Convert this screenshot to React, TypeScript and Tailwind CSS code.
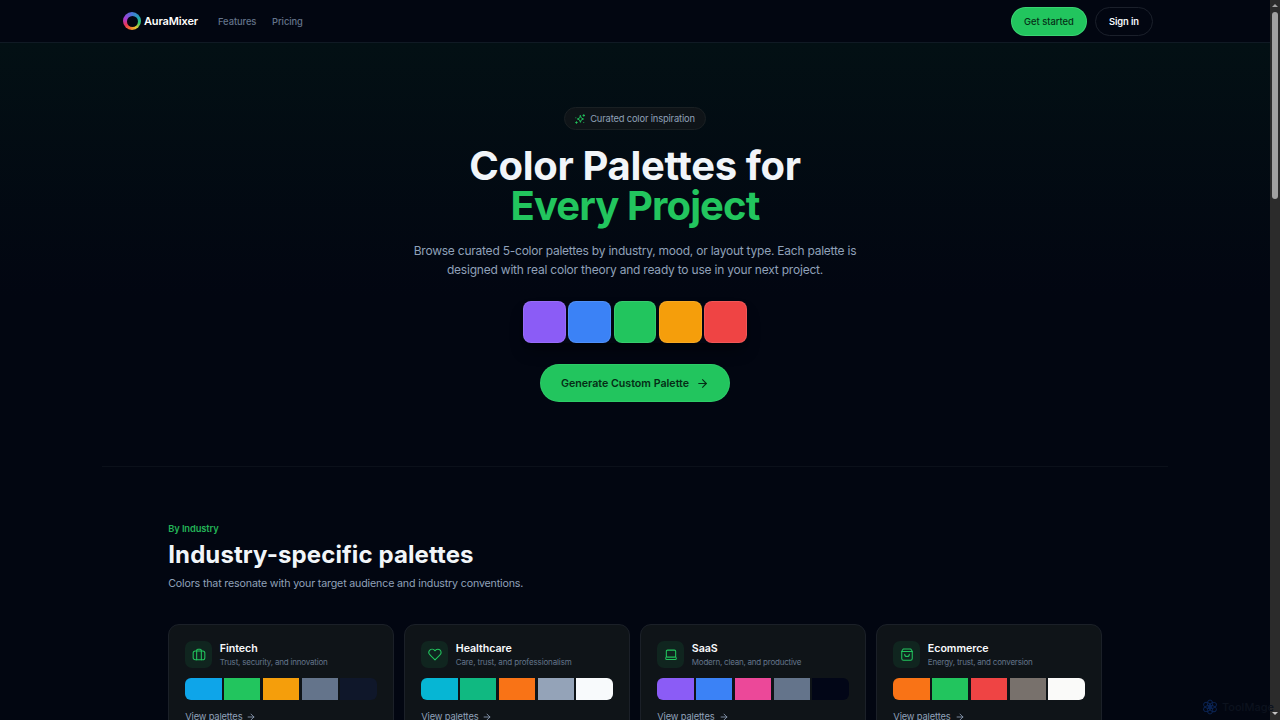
import { ArrowRight } from "lucide-react";
import type { ReactNode } from "react";

type Industry = {
  name: string;
  description: string;
  descriptionClass: string;
  icon: ReactNode;
  colors: string[];
};

const industries: Industry[] = [
  {
    name: "Fintech",
    description: "Trust, security, and innovation",
    descriptionClass: "tracking-[-0.2px]",
    icon: (
      <>
        <rect x="2" y="6" width="20" height="15" rx="3.5" />
        <path d="M8 21V5a2 2 0 0 1 2-2h4a2 2 0 0 1 2 2v16" />
      </>
    ),
    colors: ["#0ea5e9", "#22c55e", "#f59e0b", "#64748b", "#0f172a"],
  },
  {
    name: "Healthcare",
    description: "Care, trust, and professionalism",
    descriptionClass: "tracking-[-0.13px]",
    icon: (
      <path d="M20.8 4.6a5.5 5.5 0 0 0-7.8 0l-1 1-1-1a5.5 5.5 0 0 0-7.8 7.8l1 1L12 21.2l7.8-7.8 1-1a5.5 5.5 0 0 0 0-7.8z" />
    ),
    colors: ["#06b6d4", "#10b981", "#f97316", "#94a3b8", "#f8fafc"],
  },
  {
    name: "SaaS",
    description: "Modern, clean, and productive",
    descriptionClass: "tracking-[-0.22px]",
    icon: (
      <>
        <rect x="4" y="4.5" width="16" height="12" rx="2" />
        <path d="M4 16l-1 2.3a1.5 1.5 0 0 0 1.3 2.2h15.4a1.5 1.5 0 0 0 1.3-2.2l-1-2.3" />
      </>
    ),
    colors: ["#8b5cf6", "#3b82f6", "#ec4899", "#64748b", "#020617"],
  },
  {
    name: "Ecommerce",
    description: "Energy, trust, and conversion",
    descriptionClass: "tracking-[-0.2px]",
    icon: (
      <>
        <path d="M5.5 2.5h13L21 6.5V19a3 3 0 0 1-3 3H6a3 3 0 0 1-3-3V6.5z" />
        <path d="M3 7h18M8 11.5a4 4 0 0 0 8 0" />
      </>
    ),
    colors: ["#f97316", "#22c55e", "#ef4444", "#78716c", "#fafaf9"],
  },
];

const heroColors = ["#8b5cf6", "#3b82f6", "#22c55e", "#f59e0b", "#ef4444"];

const Header = () => (
  <header className="h-[43px] shrink-0 border-b border-[#101a24] bg-[#020611]">
    <div className="mx-auto flex h-[42px] w-[1066px] items-center pl-[21px] pr-[15px]">
      <div className="flex w-[95px] items-center gap-[3px]">
        <span className="flex size-[18px] items-center justify-center rounded-full bg-[conic-gradient(from_0deg,#4776d8,#22a6b0_65deg,#35c86b_105deg,#e6c52f_150deg,#ef792e_190deg,#eb3654_235deg,#a63bd2_290deg,#4776d8)]">
          <span className="size-[11px] rounded-full bg-[#020611]" />
        </span>
        <span className="whitespace-nowrap text-[11px] font-semibold tracking-[-0.13px] text-white">AuraMixer</span>
      </div>
      <nav className="flex pt-px text-[9.33px] font-medium text-[#64748b]">
        <a className="w-[54px] tracking-[-0.05px]">Features</a>
        <a className="tracking-[-0.05px]">Pricing</a>
      </nav>
      <div className="ml-auto flex gap-2 text-[9.33px]">
        <button className="h-[29px] w-[76px] rounded-full border border-[#4ade80]/60 bg-[#22c55e] pt-px font-medium text-[#052e16]">Get started</button>
        <button className="h-[29px] w-[58px] rounded-full border border-[#1b202b] pt-px font-semibold tracking-[-0.1px] text-slate-50">Sign in</button>
      </div>
    </div>
  </header>
);

const Hero = () => (
  <section className="flex h-[423px] shrink-0 flex-col items-center bg-linear-to-b from-[#031014] to-[#020611] to-60% pt-16">
    <div className="flex h-[23px] w-[142px] shrink-0 items-center justify-center gap-[5px] rounded-full border border-[#1a2023] bg-[#0f1418] text-[9.33px] text-slate-400">
      <svg viewBox="0 0 24 24" className="size-[10px] text-[#22c55e]" fill="none" stroke="currentColor" strokeWidth="2.2" strokeLinecap="round" strokeLinejoin="round">
        <path d="M13 4l2 5.5L20.5 12 15 14.2 13 20l-2.2-5.8L5.5 12l5.3-2.5z" />
        <path d="M21 1.5v4M19 3.5h4M3.5 18.5v4M1.5 20.5h4M2 9h.1M21 20.5h.1" />
      </svg>
      <span className="whitespace-nowrap tracking-[-0.16px]">Curated color inspiration</span>
    </div>
    <h1 className="mt-4 whitespace-nowrap text-center text-[40px] font-bold leading-10 text-slate-100">
      <span className="block tracking-[-0.35px]">Color Palettes for</span>
      <span className="block tracking-[-0.9px] text-[#22c55e]">Every Project</span>
    </h1>
    <p className="mt-[15px] whitespace-nowrap text-center text-[12px] leading-[19px] text-slate-400">
      <span className="block tracking-[-0.23px]">Browse curated 5-color palettes by industry, mood, or layout type. Each palette is</span>
      <span className="block tracking-[-0.21px]">designed with real color theory and ready to use in your next project.</span>
    </p>
    <div className="mt-[21.5px] flex gap-[2.67px] rounded-lg shadow-lg shadow-black/40">
      {heroColors.map((color) => (
        <div key={color} className="size-[42.67px] rounded-lg border border-white/10" style={{ backgroundColor: color }} />
      ))}
    </div>
    <button className="mt-[21px] flex h-[38px] w-[190px] shrink-0 items-center justify-center gap-[7px] rounded-full border border-[#4ade80]/30 bg-[#22c55e] text-[10.67px] font-semibold text-[#052e16]">
      <span className="whitespace-nowrap pt-px">Generate Custom Palette</span>
      <ArrowRight className="size-[13px]" strokeWidth={2} />
    </button>
  </section>
);

const IndustryCard = ({ industry }: { industry: Industry }) => (
  <article className="h-[125px] rounded-[11px] border border-[#1b2028] bg-[#0f1418] px-4 pt-4">
    <div className="flex gap-[7.5px]">
      <div className="flex size-[27px] shrink-0 items-center justify-center rounded-[7px] bg-[#10251f]">
        <svg viewBox="0 0 24 24" className="size-[14px] -translate-y-[0.5px] text-[#22c55e]" fill="none" stroke="currentColor" strokeWidth="1.8" strokeLinecap="round" strokeLinejoin="round">
          {industry.icon}
        </svg>
      </div>
      <div className="whitespace-nowrap">
        <h3 className="text-[10.67px] font-semibold leading-[15px] tracking-[-0.05px] text-slate-50">{industry.name}</h3>
        <p className={`text-[8px] leading-[12px] text-[#64748b] ${industry.descriptionClass}`}>{industry.description}</p>
      </div>
    </div>
    <div className="mt-[10px] grid h-[22px] grid-cols-5 gap-[2.5px] overflow-hidden rounded-[6px]">
      {industry.colors.map((color) => (
        <div key={color} style={{ backgroundColor: color }} />
      ))}
    </div>
    <a className="mt-[10px] flex items-center gap-1 text-[9.33px] leading-[14px] tracking-[-0.15px] text-slate-400">
      View palettes
      <ArrowRight className="size-[10px]" strokeWidth={2} />
    </a>
  </article>
);

const Scrollbar = () => (
  <div className="flex w-[10px] shrink-0 flex-col items-center bg-[#2b2b2b]">
    <span className="mt-1 h-[3px] w-[6px] bg-[#a3a3a3] [clip-path:polygon(50%_0,100%_100%,0_100%)]" />
    <span className="mt-[5px] h-[187px] w-[6px] rounded-full bg-[#a0a0a0]" />
    <span className="mb-[5px] mt-auto h-[3px] w-[6px] bg-[#c4c4c4] [clip-path:polygon(0_0,100%_0,50%_100%)]" />
  </div>
);

const App = () => (
  <div className="relative flex h-[720px] w-[1280px] overflow-hidden bg-[#020611] font-[Inter,sans-serif]">
    <main className="flex w-[1270px] flex-col overflow-hidden">
      <Header />
      <Hero />
      <div className="mx-auto h-px w-[1066px] shrink-0 bg-[#0b101a]" />
      <section className="mx-auto w-[933.5px] shrink-0 pt-[54.5px]">
        <p className="text-[9.33px] font-semibold leading-[14px] tracking-[-0.12px] text-[#22b357]">By Industry</p>
        <h2 className="mt-[4.5px] w-fit whitespace-nowrap text-[24px] font-bold leading-[29px] tracking-[0.1px] text-slate-100">Industry-specific palettes</h2>
        <p className="mt-[6px] w-fit text-[10.67px] leading-[17px] tracking-[-0.16px] text-slate-400">Colors that resonate with your target audience and industry conventions.</p>
        <div className="mt-8 grid grid-cols-4 gap-[10.67px]">
          {industries.map((industry) => (
            <IndustryCard key={industry.name} industry={industry} />
          ))}
        </div>
      </section>
    </main>
    <Scrollbar />
    {/* Watermark */}
    <div className="absolute left-[1202px] top-[699px] flex items-center gap-[4px]">
      <svg viewBox="0 0 24 24" className="size-4 text-[#0b2454]" fill="none" stroke="currentColor" strokeWidth="1.4">
        <ellipse cx="12" cy="7" rx="4" ry="5.5" />
        <ellipse cx="12" cy="7" rx="4" ry="5.5" transform="rotate(60 12 12)" />
        <ellipse cx="12" cy="7" rx="4" ry="5.5" transform="rotate(120 12 12)" />
        <ellipse cx="12" cy="7" rx="4" ry="5.5" transform="rotate(180 12 12)" />
        <ellipse cx="12" cy="7" rx="4" ry="5.5" transform="rotate(240 12 12)" />
        <ellipse cx="12" cy="7" rx="4" ry="5.5" transform="rotate(300 12 12)" />
        <circle cx="12" cy="12" r="2" fill="currentColor" />
      </svg>
      <span className="text-[11px] font-medium leading-4 text-[#0c121e]">ToolMage</span>
    </div>
  </div>
);

export default App;
